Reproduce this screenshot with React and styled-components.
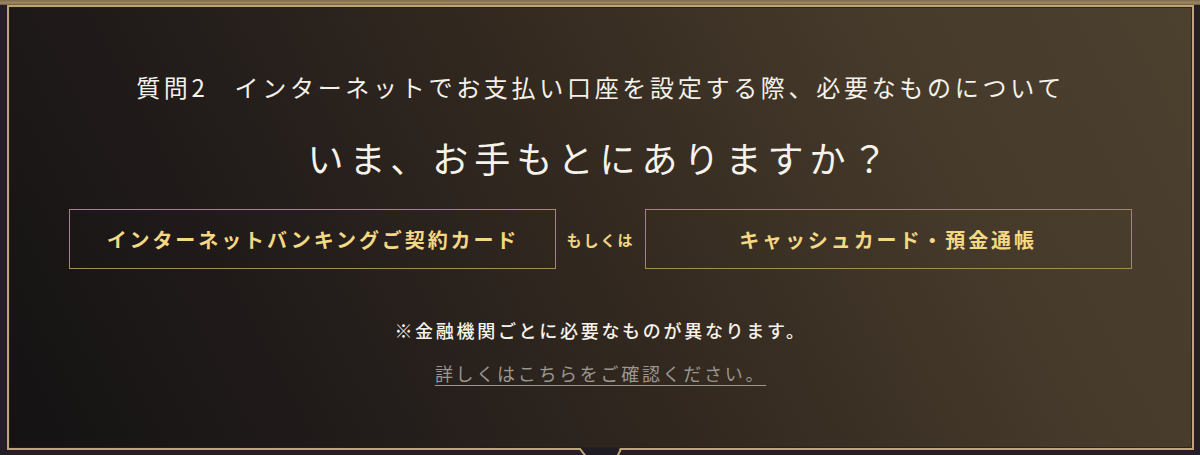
import React from "react";
import styled, { createGlobalStyle } from "styled-components";

const GlobalStyle = createGlobalStyle`
  html, body {
    margin: 0;
    padding: 0;
    background: #251e28;
  }
  body {
    font-family: "Noto Sans CJK JP", "Noto Sans", sans-serif;
  }
`;

function App() {
  return (
    <Page>
      <GlobalStyle />
      <Frame>
        <Question>
          質問2<Gap />インターネットでお支払い口座を設定する際、必要なものについて
        </Question>
        <Headline>いま、お手もとにありますか？</Headline>
        <Choices>
          <ChoiceBox>インターネットバンキングご契約カード</ChoiceBox>
          <Or>もしくは</Or>
          <ChoiceBox>キャッシュカード・預金通帳</ChoiceBox>
        </Choices>
        <Note>※金融機関ごとに必要なものが異なります。</Note>
        <DetailLink href="#">詳しくはこちらをご確認ください。</DetailLink>
        {/* small arrow notch under the frame */}
        <Notch width="48" height="12" viewBox="0 0 48 12">
          <path d="M4 0 L14 10 L38 10 L44 0 Z" fill="#1f1c24" />
          <path d="M0 1 L4 1 L12 11 M40 11 L45 1 L48 1" fill="none" stroke="#bfa575" strokeWidth="2" />
        </Notch>
      </Frame>
    </Page>
  );
}

const Page = styled.div`
  height: 455px;
  box-sizing: border-box;
  padding: 5px 6px 5px 7px;
  background: linear-gradient(to bottom, #7d6a4c 0, #a08a62 3px, #6b5a40 5px, #251e28 5px);
  overflow: hidden;
`;

const Frame = styled.div`
  position: relative;
  height: 100%;
  box-sizing: border-box;
  border: 2px solid #bfa575;
  box-shadow: inset 0 0 0 1px rgba(40, 30, 20, 0.8);
  background:
    linear-gradient(62deg, #141213 0%, #231d1b 28%, #342a20 52%, #463b2b 78%, #4c412f 100%);
  display: flex;
  flex-direction: column;
  align-items: center;
  padding-top: 62px;
`;

const Question = styled.h2`
  margin: 0;
  font-size: 24px;
  font-weight: 400;
  line-height: 36px;
  letter-spacing: 3.7px;
  color: #f4f1ea;
`;

const Gap = styled.span`
  display: inline-block;
  width: 26px;
`;

const Headline = styled.h1`
  margin: 27px 0 0;
  font-size: 36px;
  font-weight: 400;
  line-height: 50px;
  letter-spacing: 6px;
  color: #f6f3ec;
`;

const Choices = styled.div`
  margin-top: 27px;
  display: flex;
  align-items: center;
  gap: 10px;
`;

const ChoiceBox = styled.div`
  width: 487px;
  height: 60px;
  box-sizing: border-box;
  border: 1px solid #a58d52;
  display: flex;
  align-items: center;
  justify-content: center;
  font-size: 20px;
  font-weight: 700;
  letter-spacing: 2.9px;
  color: #f5d883;
`;

const Or = styled.span`
  font-size: 15px;
  font-weight: 700;
  letter-spacing: 2px;
  color: #f0d587;
`;

const Note = styled.p`
  margin: 48px 0 0;
  font-size: 18px;
  font-weight: 500;
  line-height: 27px;
  letter-spacing: 2.7px;
  color: #f6f3ec;
`;

const DetailLink = styled.a`
  margin-top: 16px;
  font-size: 18px;
  line-height: 27px;
  letter-spacing: 2.7px;
  color: #9a9690;
  text-decoration: underline;
  text-underline-offset: 4px;
`;

const Notch = styled.svg`
  position: absolute;
  bottom: -12px;
  left: 50%;
  transform: translateX(-25px);
`;

export default App;
